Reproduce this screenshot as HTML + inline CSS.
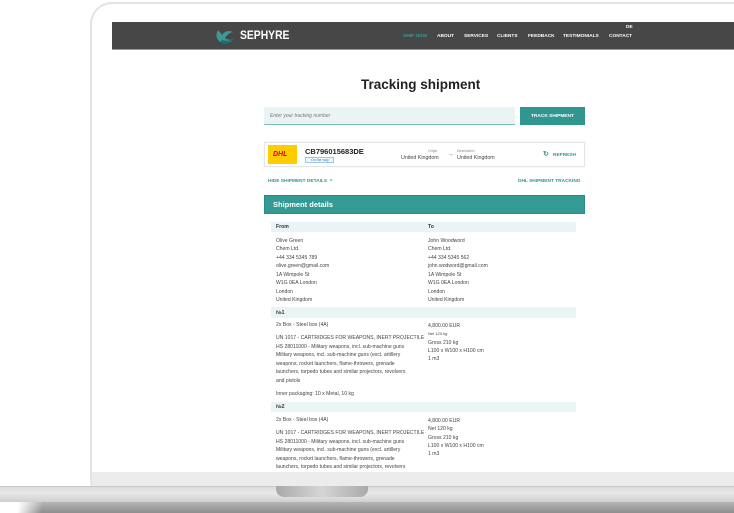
<!DOCTYPE html>
<html><head><meta charset="utf-8"><style>
*{margin:0;padding:0;box-sizing:border-box}
body{width:734px;height:513px;overflow:hidden;background:#fff;position:relative;font-family:"Liberation Sans",sans-serif;color:#333}
.a{position:absolute;white-space:nowrap}
.t{font-size:5.1px;color:#444}
.nav{font-size:4.8px;font-weight:bold;color:#fff}
</style></head><body>
<div class="a" style="left:90px;top:2px;width:700px;height:500px;border:2px solid #e3e3e3;border-radius:22px;border-right:none"></div>
<div class="a" style="left:112px;top:22px;width:622px;height:28px;background:#474747;border-bottom:1px solid #999"></div>
<svg class="a" style="left:214px;top:27px" width="22" height="18" viewBox="0 0 22 18"><path d="M4 3 Q0 10 6 15 Q14 19 20 12 Q15 14 11 11 Q14 6 19 5 Q12 2 8 8 Q6 5 4 3Z" fill="#3a9a96"/><path d="M6 15 Q14 19 20 12 Q14 15 8 13Z" fill="#1f6e6e"/></svg>
<div class="a" style="left:240px;top:30px;font-size:11.5px;font-weight:bold;color:#fff;transform:scaleX(0.9);transform-origin:left">SEPHYRE</div>
<div class="a nav" style="left:403px;top:34px;color:#3a9a96">SHIP NOW</div>
<div class="a nav" style="left:437px;top:34px">ABOUT</div>
<div class="a nav" style="left:464px;top:34px">SERVICES</div>
<div class="a nav" style="left:497px;top:34px">CLIENTS</div>
<div class="a nav" style="left:528px;top:34px">FEEDBACK</div>
<div class="a nav" style="left:563px;top:34px">TESTIMONIALS</div>
<div class="a nav" style="left:609px;top:34px">CONTACT</div>
<div class="a nav" style="left:626px;top:25px">DE</div>
<div class="a" style="left:361px;top:77px;font-size:13.5px;font-weight:bold;color:#222">Tracking shipment</div>
<div class="a" style="left:264px;top:107px;width:251px;height:18px;background:#ebf4f4;border-bottom:1px solid #7fc0bd"></div>
<div class="a" style="left:270px;top:113px;font-size:5px;color:#777;font-style:italic">Enter your tracking number</div>
<div class="a" style="left:520px;top:107px;width:65px;height:18px;background:#2f9690"></div>
<div class="a nav" style="left:531px;top:114px">TRACK SHIPMENT</div>
<div class="a" style="left:264px;top:142px;width:321px;height:25px;border:1px solid #e5e5e5;box-shadow:0 0 2px #eee"></div>
<div class="a" style="left:268px;top:145px;width:29px;height:19px;background:#ffcc00"></div>
<div class="a" style="left:273px;top:151px;font-size:7px;font-weight:bold;font-style:italic;color:#d40511">DHL</div>
<div class="a" style="left:305px;top:147px;font-size:7.5px;font-weight:bold;color:#222">CB796015683DE</div>
<div class="a" style="left:305px;top:157px;width:29px;height:6px;border:1px solid #9cc7ea;background:#eef6fd;font-size:3.5px;color:#3b7cc4;padding-left:5px;line-height:4px">On the way</div>
<div class="a" style="left:428px;top:149px;font-size:3.5px;color:#888">Origin</div>
<div class="a" style="left:401px;top:155px;font-size:5.3px;color:#444">United Kingdom</div>
<div class="a" style="left:447px;top:151px;font-size:7px;color:#3a9a96">→</div>
<div class="a" style="left:457px;top:149px;font-size:3.5px;color:#888">Destination</div>
<div class="a" style="left:457px;top:155px;font-size:5.3px;color:#444">United Kingdom</div>
<div class="a" style="left:543px;top:150px;font-size:7px;color:#2f9690;font-weight:bold">↻</div>
<div class="a nav" style="left:553px;top:153px;color:#2f9690">REFRESH</div>
<div class="a nav" style="left:268px;top:179px;color:#2f9690">HIDE SHIPMENT DETAILS &nbsp;^</div>
<div class="a nav" style="left:518px;top:179px;color:#2f9690">DHL SHIPMENT TRACKING</div>
<div class="a" style="left:264px;top:195px;width:321px;height:19px;background:#339a94;border:1px solid #2a8a85"></div>
<div class="a" style="left:273px;top:200px;font-size:7.5px;font-weight:bold;color:#fff">Shipment details</div>
<div class="a" style="left:271px;top:222px;width:305px;height:10px;background:#ebf4f4"></div>
<div class="a t" style="left:276px;top:224px;font-weight:bold;color:#333">From</div>
<div class="a t" style="left:428px;top:224px;font-weight:bold;color:#333">To</div>
<div class="a t" style="left:276px;top:237px;line-height:8.45px">Olive Green<br>Chem Ltd.<br>+44 334 5345 789<br>olive.green@gmail.com<br>1A Wimpole St<br>W1G 0EA London<br>London<br>United Kingdom</div>
<div class="a t" style="left:428px;top:237px;line-height:8.45px">John Woodword<br>Chem Ltd.<br>+44 334 5345 562<br>john.wodword@gmail.com<br>1A Wimpole St<br>W1G 0EA London<br>London<br>United Kingdom</div>
<div class="a" style="left:271px;top:307px;width:305px;height:11px;background:#ebf4f4"></div>
<div class="a t" style="left:276px;top:310px;font-weight:bold;color:#333">№1</div>
<div class="a t" style="left:276px;top:322px">2x Box - Steel box (4A)</div>
<div class="a t" style="left:276px;top:334px;line-height:8.5px">UN 1017 - CARTRIDGES FOR WEAPONS, INERT PROJECTILE<br>HS 28011000 - Military weapons, incl. sub-machine guns<br>Military weapons, incl. sub-machine guns (excl. artillery<br>weapons, rocket launchers, flame-throwers, grenade<br>launchers, torpedo tubes and similar projectors, revolvers<br>and pistols</div>
<div class="a t" style="left:276px;top:391px">Inner packaging: 10 x Metal, 10 kg</div>
<div class="a t" style="left:428px;top:322px;line-height:8.3px">4,800.00 EUR<br><span style="font-size:4px">Net 120 kg</span><br>Gross 210 kg<br>L100 x W100 x H100 cm<br>1 m3</div>
<div class="a" style="left:271px;top:402px;width:305px;height:10px;background:#ebf4f4"></div>
<div class="a t" style="left:276px;top:404px;font-weight:bold;color:#333">№2</div>
<div class="a t" style="left:276px;top:417px">2x Box - Steel box (4A)</div>
<div class="a t" style="left:276px;top:429px;line-height:8.5px">UN 1017 - CARTRIDGES FOR WEAPONS, INERT PROJECTILE<br>HS 28011000 - Military weapons, incl. sub-machine guns<br>Military weapons, incl. sub-machine guns (excl. artillery<br>weapons, rocket launchers, flame-throwers, grenade<br>launchers, torpedo tubes and similar projectors, revolvers</div>
<div class="a t" style="left:428px;top:417px;line-height:8.3px">4,800.00 EUR<br>Net 120 kg<br>Gross 210 kg<br>L100 x W100 x H100 cm<br>1 m3</div>
<div class="a" style="left:92px;top:472px;width:642px;height:14px;background:#ececec"></div>
<div class="a" style="left:0;top:486px;width:734px;height:16px;background:linear-gradient(#dcdcdc,#e8e8e8 40%,#cfcfcf);border-top:1px solid #c8c8c8"></div>
<div class="a" style="left:276px;top:486px;width:92px;height:11px;border-radius:0 0 8px 8px;background:linear-gradient(90deg,#a9a9a9,#d5d5d5 50%,#a9a9a9)"></div>
<div class="a" style="left:10px;top:502px;width:724px;height:11px;background:linear-gradient(#b5b5b5,#8e8e8e)"></div>
<div class="a" style="left:0;top:502px;width:60px;height:11px;background:linear-gradient(100deg,#fff 30%,transparent 70%)"></div>
</body></html>
